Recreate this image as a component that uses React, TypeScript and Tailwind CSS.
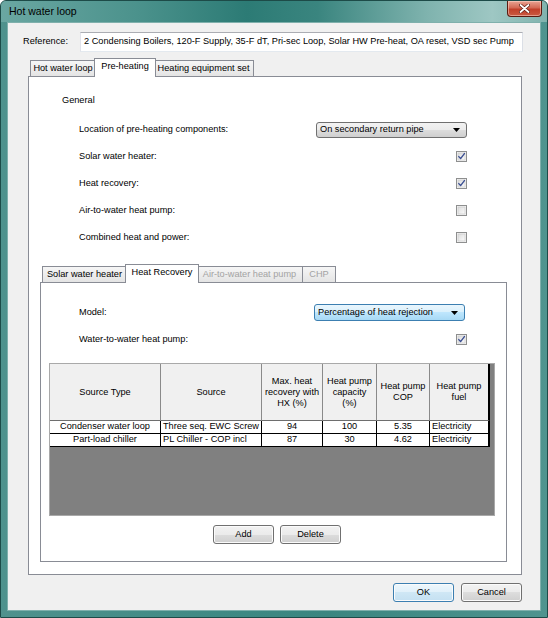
import React from "react";

function CheckBox({ checked }: { checked: boolean }) {
  return (
    <svg width="11" height="11" viewBox="0 0 11 11" className="block">
      <defs>
        <linearGradient id="cbg" x1="0" y1="0" x2="1" y2="1">
          <stop offset="0" stopColor="#dcdcdc" />
          <stop offset="1" stopColor="#fbfbfb" />
        </linearGradient>
      </defs>
      <rect x="0.5" y="0.5" width="10" height="10" fill="#f4f4f4" stroke="#8e8f8f" />
      <rect x="2" y="2" width="7" height="7" fill="url(#cbg)" stroke="#c6c6c6" strokeWidth="0.6" />
      {checked && (
        <path d="M2.8 5.6 L4.6 7.6 L8.4 2.6" fill="none" stroke="#3b4f92" strokeWidth="1.4" strokeLinecap="round" strokeLinejoin="round" />
      )}
    </svg>
  );
}

function Arrow() {
  return (
    <svg width="7" height="4" viewBox="0 0 7 4" className="block">
      <path d="M0 0 H7 L3.5 4 Z" fill="#000" />
    </svg>
  );
}

function Combo({ text, focused }: { text: string; focused?: boolean }) {
  return (
    <div
      className={
        focused
          ? "flex h-[17px] w-[151px] items-center justify-between rounded-[3px] border border-[#3c7fb1] bg-[linear-gradient(#eaf6fd_0%,#d9f0fc_50%,#bee6fd_50%,#a7d9f5_100%)] pl-[3px] pr-[6px]"
          : "flex h-[16px] w-[151px] items-center justify-between rounded-[3px] border border-[#707070] bg-[linear-gradient(#f2f2f2_0%,#ebebeb_50%,#dddddd_50%,#cfcfcf_100%)] pl-[3px] pr-[6px]"
      }
    >
      <span className="whitespace-nowrap">{text}</span>
      <Arrow />
    </div>
  );
}

function Button({ label, primary, w }: { label: string; primary?: boolean; w: string }) {
  return (
    <div
      className={
        (primary
          ? "border-[#3c7fb1] bg-[linear-gradient(#eef7fc_0%,#e0f0fa_50%,#cfe7f5_50%,#c4e0f1_100%)] "
          : "border-[#707070] bg-[linear-gradient(#f2f2f2_0%,#ebebeb_50%,#dddddd_50%,#cfcfcf_100%)] ") +
        w +
        " flex h-[19px] items-center justify-center rounded-[3px] border shadow-[inset_0_0_0_1px_#fbfbfb]"
      }
    >
      {label}
    </div>
  );
}

function Row({ label, children }: { label: string; children: React.ReactNode }) {
  return (
    <div className="flex h-[27px] items-center justify-between">
      <span>{label}</span>
      {children}
    </div>
  );
}

const header = [
  ["Source Type"],
  ["Source"],
  ["Max. heat", "recovery with", "HX (%)"],
  ["Heat pump", "capacity", "(%)"],
  ["Heat pump", "COP"],
  ["Heat pump", "fuel"],
];

const rows = [
  ["Condenser water loop", "Three seq. EWC Screw", "94", "100", "5.35", "Electricity"],
  ["Part-load chiller", "PL Chiller - COP incl", "87", "30", "4.62", "Electricity"],
];

// column alignment: source and fuel are left aligned, the rest centred
const align = ["justify-center", "justify-start", "justify-center", "justify-center", "justify-center", "justify-start"];

export default function App() {
  return (
    <div className="h-[618px] w-[548px] bg-white font-['Liberation_Sans',Arial,sans-serif] text-[9.2px] leading-none text-black">
      <div className="flex h-full flex-col rounded-t-[6px] border border-[#1d4b48] bg-[linear-gradient(90deg,#4f928d_0%,#3f8a84_40%,#3b8680_60%,#4f948f_100%)] px-[6px] pb-[6px]">
        {/* title bar */}
        <div className="-mx-[6px] flex h-[21px] items-start justify-between rounded-t-[5px] bg-[linear-gradient(90deg,#6aa7a2_0%,#4b928c_25%,#2c7b75_45%,#3a857f_58%,#7fb3ae_78%,#9ec7c3_90%,#80b3ae_100%)] pl-[8px] pr-[5px]">
          <span className="mt-[5px] text-[10.5px] text-black">Hot water loop</span>
          <div className="flex h-[16px] w-[35px] items-center justify-center rounded-b-[4px] border border-t-0 border-[#5a1a10] bg-[linear-gradient(#e9a493_0%,#d46a55_45%,#c2402a_55%,#c95a42_100%)] shadow-[inset_0_0_0_1px_rgba(255,220,210,0.5)]">
            <svg width="11" height="9" viewBox="0 0 11 9">
              <path d="M1.5 1 L9.5 8 M9.5 1 L1.5 8" stroke="#5a1a10" strokeWidth="3.2" strokeLinecap="round" />
              <path d="M1.5 1 L9.5 8 M9.5 1 L1.5 8" stroke="#ffffff" strokeWidth="1.8" strokeLinecap="round" />
            </svg>
          </div>
        </div>

        {/* client area */}
        <div className="flex flex-1 flex-col border border-[#7fb0ac] bg-[#f0f0f0]">
          {/* reference */}
          <div className="mt-[9px] flex h-[20px] items-center pl-[15px]">
            <span className="w-[57px]">Reference:</span>
            <div className="flex h-[20px] w-[443px] items-center overflow-hidden whitespace-nowrap border border-[#abadb3] border-b-[#e3e9ef] border-l-[#e2e3ea] border-r-[#dbdfe6] bg-white pl-[3px]">
              2 Condensing Boilers, 120-F Supply, 35-F dT, Pri-sec Loop, Solar HW Pre-heat, OA reset, VSD sec Pump
            </div>
          </div>

          {/* outer tabs */}
          <div className="ml-[20px] mt-[6px] flex h-[18px] items-end whitespace-nowrap pl-[2px]">
            <div className="flex h-[16px] w-[66px] items-center justify-center border border-b-0 border-[#898c95] bg-[linear-gradient(#f6f6f6,#e4e4e4)]">
              Hot water loop
            </div>
            <div className="relative z-10 -mx-[2px] -mb-[1px] flex h-[19px] w-[62px] items-start justify-center border border-b-0 border-[#898c95] bg-white pt-[3px]">
              Pre-heating
            </div>
            <div className="flex h-[16px] w-[100px] items-center justify-center border border-b-0 border-l-0 border-[#898c95] bg-[linear-gradient(#f6f6f6,#e4e4e4)]">
              Heating equipment set
            </div>
          </div>

          {/* outer panel */}
          <div className="ml-[20px] flex h-[499px] w-[494px] flex-col border border-[#898c95] bg-white">
            <div className="mt-[16px] flex h-[16px] items-center pl-[33px]">General</div>
            <div className="mt-[7px] pl-[50px] pr-[54px]">
              <Row label="Location of pre-heating components:">
                <Combo text="On secondary return pipe" />
              </Row>
              <Row label="Solar water heater:">
                <CheckBox checked />
              </Row>
              <Row label="Heat recovery:">
                <CheckBox checked />
              </Row>
              <Row label="Air-to-water heat pump:">
                <CheckBox checked={false} />
              </Row>
              <Row label="Combined heat and power:">
                <CheckBox checked={false} />
              </Row>
            </div>

            {/* inner tabs */}
            <div className="ml-[11px] mt-[13px] flex h-[18px] items-end whitespace-nowrap pl-[2px]">
              <div className="flex h-[16px] w-[85px] items-center justify-center border border-b-0 border-[#898c95] bg-[linear-gradient(#f6f6f6,#e4e4e4)]">
                Solar water heater
              </div>
              <div className="relative z-10 -mx-[2px] -mb-[1px] flex h-[19px] w-[74px] items-start justify-center border border-b-0 border-[#898c95] bg-white pt-[3px]">
                Heat Recovery
              </div>
              <div className="flex h-[16px] w-[106px] items-center justify-center border border-b-0 border-l-0 border-[#898c95] bg-[linear-gradient(#f6f6f6,#e4e4e4)] text-[#a3a3a3]">
                Air-to-water heat pump
              </div>
              <div className="flex h-[16px] w-[33px] items-center justify-center border border-b-0 border-l-0 border-[#898c95] bg-[linear-gradient(#f6f6f6,#e4e4e4)] text-[#a3a3a3]">
                CHP
              </div>
            </div>

            {/* inner panel */}
            <div className="ml-[11px] flex h-[280px] w-[467px] flex-col border border-[#898c95] bg-white">
              <div className="mt-[16px] pl-[38px] pr-[39px]">
                <div className="flex h-[27px] items-center justify-between pr-[2px]">
                  <span>Model:</span>
                  <Combo text="Percentage of heat rejection" focused />
                </div>
                <Row label="Water-to-water heat pump:">
                  <CheckBox checked />
                </Row>
              </div>

              {/* heat source grid */}
              <div className="ml-[8px] mt-[10px] h-[153px] w-[446px] border border-[#a9a9a9] bg-[#808080]">
                <div className="grid w-[440px] grid-cols-[111px_101px_61px_54px_53px_60px]">
                  {header.map((lines, i) => (
                    <div
                      key={"h" + i}
                      className={
                        "flex h-[57px] flex-col items-center justify-center border-b border-[#6e6e6e] bg-[#f0f0f0] text-center leading-[11px] " +
                        (i === 5 ? "border-r-2 border-r-black" : "border-r border-r-[#8a8a8a]")
                      }
                    >
                      {lines.map((l) => (
                        <span key={l} className="whitespace-nowrap">{l}</span>
                      ))}
                    </div>
                  ))}
                  {rows.map((r, ri) =>
                    r.map((c, ci) => (
                      <div
                        key={ri + "-" + ci}
                        className={
                          "flex h-[13px] items-center overflow-hidden whitespace-nowrap border-b border-black bg-white px-[2px] " +
                          align[ci] +
                          (ci === 5 ? " border-r-2 border-r-black" : " border-r border-r-black")
                        }
                      >
                        {c}
                      </div>
                    ))
                  )}
                </div>
              </div>

              <div className="mt-[9px] flex justify-center gap-[6px] pl-[7px]">
                <Button label="Add" w="w-[61px]" />
                <Button label="Delete" w="w-[61px]" />
              </div>
            </div>
          </div>

          {/* dialog buttons */}
          <div className="mt-[8px] flex justify-end gap-[7px] pr-[18px]">
            <Button label="OK" primary w="w-[61px]" />
            <Button label="Cancel" w="w-[61px]" />
          </div>
        </div>
      </div>
    </div>
  );
}
